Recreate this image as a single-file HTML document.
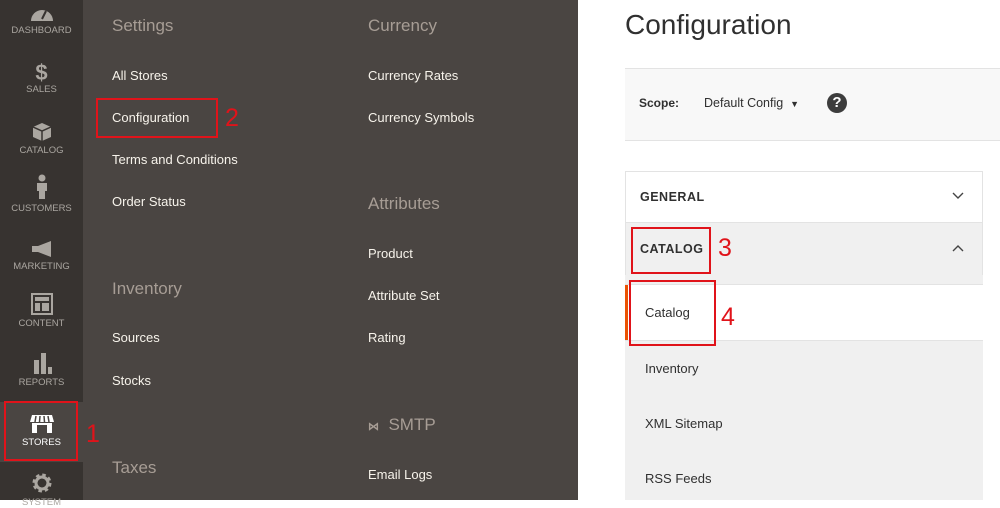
<!DOCTYPE html>
<html><head><style>
*{margin:0;padding:0;box-sizing:border-box}
body{width:1000px;height:500px;overflow:hidden;background:#fff;font-family:"Liberation Sans",sans-serif;position:relative}
.a{position:absolute;white-space:nowrap}
#side{left:0;top:0;width:83px;height:500px;background:#373330}
.si{position:absolute;left:0;width:83px;text-align:center;color:#aaa6a0;font-size:9.5px}
.si svg{display:block;margin:0 auto 3px}
#menu{left:83px;top:0;width:495px;height:500px;background:#4a4542}
.h{color:#a79d95;font-size:17px}
.m{color:#f7f3eb;font-size:13px}
.red{position:absolute;border:2px solid #e0131a}
.num{position:absolute;color:#e0131a;font-size:25px}
.row{position:absolute;left:625px;width:358px}
</style></head><body>
<div id="side" class="a">
 <div class="si" style="top:4px"><svg width="26" height="18" viewBox="0 0 26 18"><path d="M2 17A11 11 0 0 1 24 17Z" fill="#aaa6a0"/><path d="M13 15L17 7" stroke="#373330" stroke-width="2"/></svg>DASHBOARD</div>
 <div class="si" style="top:62px"><div style="font-size:22px;font-weight:bold;line-height:22px">$</div>SALES</div>
 <div class="si" style="top:122px"><svg width="20" height="20" viewBox="0 0 20 20"><path d="M10 1L19 5V15L10 19L1 15V5Z" fill="#aaa6a0"/><path d="M1 5L10 9L19 5M10 9V19" stroke="#373330" stroke-width="1.5" fill="none"/></svg>CATALOG</div>
 <div class="si" style="top:174px"><svg width="14" height="26" viewBox="0 0 14 26"><circle cx="7" cy="4" r="3.5" fill="#aaa6a0"/><path d="M2 9H12V17H10V25H4V17H2Z" fill="#aaa6a0"/></svg>CUSTOMERS</div>
 <div class="si" style="top:240px"><svg width="22" height="18" viewBox="0 0 22 18"><path d="M1 6H7L20 1V17L7 12H1Z" fill="#aaa6a0"/></svg>MARKETING</div>
 <div class="si" style="top:293px"><svg width="22" height="22" viewBox="0 0 22 22"><rect x="1" y="1" width="20" height="20" fill="none" stroke="#aaa6a0" stroke-width="2"/><rect x="4" y="4" width="14" height="4" fill="#aaa6a0"/><rect x="4" y="10" width="5" height="8" fill="#aaa6a0"/><rect x="11" y="10" width="7" height="8" fill="#aaa6a0"/></svg>CONTENT</div>
 <div class="si" style="top:352px"><svg width="22" height="22" viewBox="0 0 22 22"><rect x="3" y="8" width="5" height="14" fill="#aaa6a0"/><rect x="10" y="1" width="5" height="21" fill="#aaa6a0"/><rect x="17" y="15" width="4" height="7" fill="#aaa6a0"/></svg>REPORTS</div>
 <div style="position:absolute;left:0;top:402px;width:83px;height:60px;background:#4a4542"></div>
 <div class="si" style="top:414px;color:#fff"><svg width="26" height="20" viewBox="0 0 26 20"><path d="M3 1H23L25 8H1Z" fill="#fff"/><path d="M7 2L6 8M11 2L10.5 8M15 2L15.5 8M19 2L20 8" stroke="#4a4542" stroke-width="1.5"/><path d="M3 9H23V19H3Z" fill="#fff"/><rect x="8" y="11" width="10" height="8" fill="#4a4542"/></svg>STORES</div>
 <div class="si" style="top:472px"><svg width="22" height="22" viewBox="0 0 22 22"><circle cx="11" cy="11" r="7" fill="none" stroke="#aaa6a0" stroke-width="5" stroke-dasharray="3 2.5"/><circle cx="11" cy="11" r="6" fill="none" stroke="#aaa6a0" stroke-width="3"/></svg>SYSTEM</div>
</div>
<div id="menu" class="a"></div>
<div class="a h" style="left:112px;top:16px">Settings</div>
<div class="a m" style="left:112px;top:68px">All Stores</div>
<div class="a m" style="left:112px;top:110px">Configuration</div>
<div class="a m" style="left:112px;top:152px">Terms and Conditions</div>
<div class="a m" style="left:112px;top:194px">Order Status</div>
<div class="a h" style="left:112px;top:279px">Inventory</div>
<div class="a m" style="left:112px;top:330px">Sources</div>
<div class="a m" style="left:112px;top:373px">Stocks</div>
<div class="a h" style="left:112px;top:458px">Taxes</div>
<div class="a h" style="left:368px;top:16px">Currency</div>
<div class="a m" style="left:368px;top:68px">Currency Rates</div>
<div class="a m" style="left:368px;top:110px">Currency Symbols</div>
<div class="a h" style="left:368px;top:194px">Attributes</div>
<div class="a m" style="left:368px;top:246px">Product</div>
<div class="a m" style="left:368px;top:288px">Attribute Set</div>
<div class="a m" style="left:368px;top:330px">Rating</div>
<div class="a h" style="left:368px;top:415px"><span style="font-size:11px;font-weight:bold">⋈</span>&nbsp;&nbsp;SMTP</div>
<div class="a m" style="left:368px;top:467px">Email Logs</div>
<div class="red" style="left:96px;top:98px;width:122px;height:40px"></div>
<div class="num" style="left:225px;top:104px">2</div>
<div class="red" style="left:4px;top:401px;width:74px;height:60px"></div>
<div class="num" style="left:86px;top:420px">1</div>

<div class="a" style="left:625px;top:9px;font-size:28px;color:#303030">Configuration</div>
<div class="a" style="left:625px;top:68px;width:375px;height:73px;background:#f8f8f8;border-top:1px solid #e3e3e3;border-bottom:1px solid #e3e3e3"></div>
<div class="a" style="left:639px;top:96px;font-size:12px;font-weight:bold;color:#303030">Scope:</div>
<div class="a" style="left:704px;top:96px;font-size:12.5px;color:#303030">Default Config&nbsp;&nbsp;<span style="font-size:9px">▼</span></div>
<div class="a" style="left:827px;top:93px;width:20px;height:20px;border-radius:50%;background:#3d3d3d;color:#fff;font-weight:bold;font-size:15px;text-align:center;line-height:20px">?</div>
<div class="row" style="top:171px;height:52px;background:#fff;border:1px solid #e3e3e3"></div>
<div class="a" style="left:640px;top:190px;font-size:12.5px;font-weight:bold;color:#303030;letter-spacing:.5px">GENERAL</div>
<div class="row" style="top:223px;height:52px;background:#f0f0f0;border-left:1px solid #e3e3e3;border-right:1px solid #e3e3e3"></div>
<div class="a" style="left:640px;top:242px;font-size:12.5px;font-weight:bold;color:#303030;letter-spacing:.5px">CATALOG</div>
<svg class="a" style="left:952px;top:244px" width="12" height="8"><path d="M1 7L6 2L11 7" stroke="#444" stroke-width="1.4" fill="none"/></svg>
<svg class="a" style="left:952px;top:192px" width="12" height="8"><path d="M1 1L6 6L11 1" stroke="#444" stroke-width="1.4" fill="none"/></svg>
<div class="row" style="top:275px;height:10px;background:#f0f0f0;border-bottom:1px solid #e3e3e3"></div>
<div class="row" style="top:285px;height:55px;background:#fff;border-left:3px solid #eb5202"></div>
<div class="a" style="left:645px;top:305px;font-size:13px;color:#303030">Catalog</div>
<div class="row" style="top:340px;height:160px;background:#f0f0f0;border-top:1px solid #e3e3e3"></div>
<div class="a" style="left:645px;top:361px;font-size:13px;color:#303030">Inventory</div>
<div class="a" style="left:645px;top:416px;font-size:13px;color:#303030">XML Sitemap</div>
<div class="a" style="left:645px;top:471px;font-size:13px;color:#303030">RSS Feeds</div>
<div class="red" style="left:631px;top:227px;width:80px;height:47px"></div>
<div class="num" style="left:718px;top:234px">3</div>
<div class="red" style="left:629px;top:280px;width:87px;height:66px"></div>
<div class="num" style="left:721px;top:303px">4</div>
</body></html>
